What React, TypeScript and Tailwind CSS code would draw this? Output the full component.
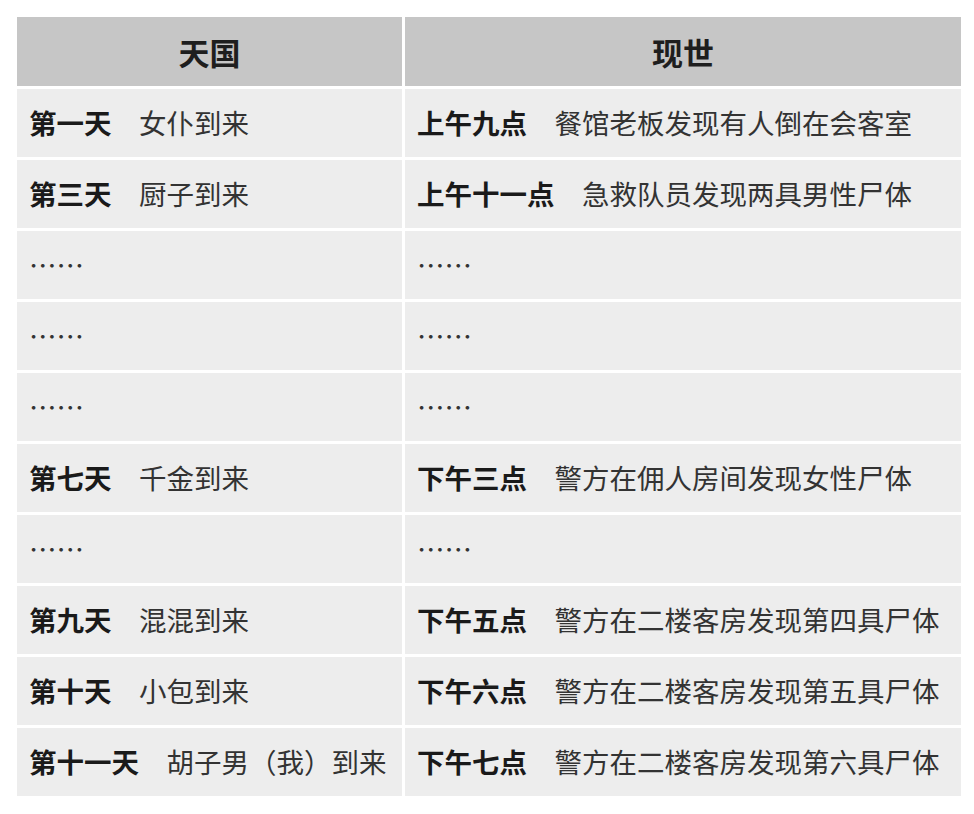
const rows: [string, string, string, string][] = [
  ['第一天', '女仆到来', '上午九点', '餐馆老板发现有人倒在会客室'],
  ['第三天', '厨子到来', '上午十一点', '急救队员发现两具男性尸体'],
  ['……', '', '……', ''],
  ['……', '', '……', ''],
  ['……', '', '……', ''],
  ['第七天', '千金到来', '下午三点', '警方在佣人房间发现女性尸体'],
  ['……', '', '……', ''],
  ['第九天', '混混到来', '下午五点', '警方在二楼客房发现第四具尸体'],
  ['第十天', '小包到来', '下午六点', '警方在二楼客房发现第五具尸体'],
  ['第十一天', '胡子男（我）到来', '下午七点', '警方在二楼客房发现第六具尸体'],
];

function Cell({ label, text }: { label: string; text: string }) {
  const isDots = label === '……';
  return (
    <div className="flex h-[68px] items-center whitespace-nowrap bg-[#ededed] pl-[12px]">
      {isDots ? (
        <span className="text-[#333]">……</span>
      ) : (
        <>
          <span className="font-bold text-[#1a1a1a]">{label}</span>
          <span className="text-[#333]">{'\u3000' + text}</span>
        </>
      )}
    </div>
  );
}

export default function App() {
  return (
    <div
      className="min-h-screen bg-white pl-[17px] pt-[17px] text-[27.5px] leading-none"
      style={{ fontFamily: '"Noto Sans CJK SC", "Noto Sans", sans-serif' }}
    >
      <div className="grid w-[944px] grid-cols-[385px_556px] gap-[3px]">
        {/* header */}
        <div className="flex h-[69px] items-center justify-center bg-[#c6c6c6] text-[31px] font-bold text-[#1e1e1e]">
          天国
        </div>
        <div className="flex h-[69px] items-center justify-center bg-[#c6c6c6] text-[31px] font-bold text-[#1e1e1e]">
          现世
        </div>
        {rows.map((r, i) => (
          <div key={i} className="contents">
            <Cell label={r[0]} text={r[1]} />
            <Cell label={r[2]} text={r[3]} />
          </div>
        ))}
      </div>
    </div>
  );
}
